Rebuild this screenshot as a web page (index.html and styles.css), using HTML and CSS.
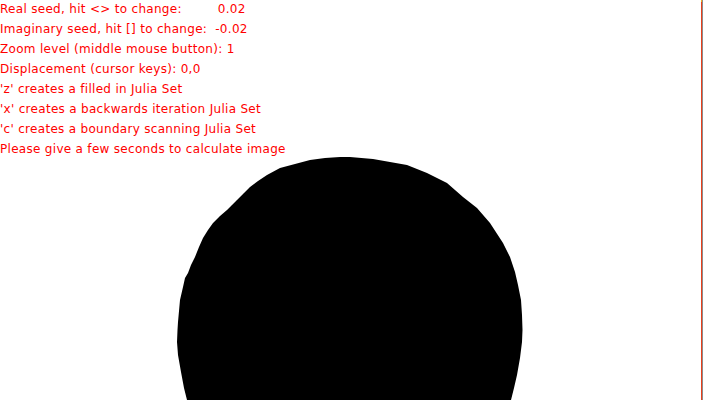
FILE: index.html
```html
<!DOCTYPE html>
<html>
<head>
<meta charset="utf-8">
<link rel="stylesheet" href="styles.css">
</head>
<body>
<div class="stage">
  <svg class="canvas" width="703" height="400" viewBox="0 0 703 400">
    <path class="julia" d="M340,157 L350,157 L373,159 L390,162 L407,165 L427,173 L447,183 L463,197 L477,208 L490,223 L503,243 L510,257 L515,272 L518,285 L521,300 L522,315 L522.5,330 L522,342 L520,358 L517,375 L514,388 L511,400 L187,400 L184,388 L181,372 L178,355 L177,342 L177.5,330 L178,322 L180,300 L183,287 L185,278 L188,273 L191,265 L195,257 L199,247 L203,238 L208,230 L213,223 L220,216 L227,210 L232,205 L237,200 L244,193 L250,187 L258,181 L267,175 L280,168 L295,164 L310,160 L325,158 Z"/>
    <rect class="edge-red" x="701" y="0" width="1" height="400"/>
    <rect class="edge-top" x="701" y="0" width="1" height="2"/>
    <rect class="edge-gray" x="702" y="0" width="1" height="400"/>
  </svg>
  <div class="info">
    <div class="line">Real seed, hit &lt;&gt; to change:<span class="val v1">0.02</span></div>
    <div class="line">Imaginary seed, hit [] to change:<span class="val v2">-0.02</span></div>
    <div class="line">Zoom level (middle mouse button): 1</div>
    <div class="line">Displacement (cursor keys): 0,0</div>
    <div class="line">'z' creates a filled in Julia Set</div>
    <div class="line">'x' creates a backwards iteration Julia Set</div>
    <div class="line">'c' creates a boundary scanning Julia Set</div>
    <div class="line">Please give a few seconds to calculate image</div>
  </div>
</div>
</body>
</html>
```
FILE: styles.css
```css
html, body {
  margin: 0;
  padding: 0;
  background: #ffffff;
}
.stage {
  position: relative;
  width: 703px;
  height: 400px;
  overflow: hidden;
  background: #ffffff;
}
.canvas {
  position: absolute;
  left: 0;
  top: 0;
}
.julia {
  fill: #000000;
}
.edge-red {
  fill: #e8401c;
}
.edge-top {
  fill: #f0b020;
}
.edge-gray {
  fill: #8c8c8c;
}
.info {
  position: relative;
  display: flex;
  flex-direction: column;
  padding-top: 0;
  margin-top: -1px;
  font-family: "DejaVu Sans", sans-serif;
  font-size: 12px;
  letter-spacing: 0.3px;
  line-height: 20px;
  color: #ff0000;
  white-space: pre;
}
.val {
  display: inline-block;
}
.v1 {
  margin-left: 36px;
}
.v2 {
  margin-left: 8px;
}
```
